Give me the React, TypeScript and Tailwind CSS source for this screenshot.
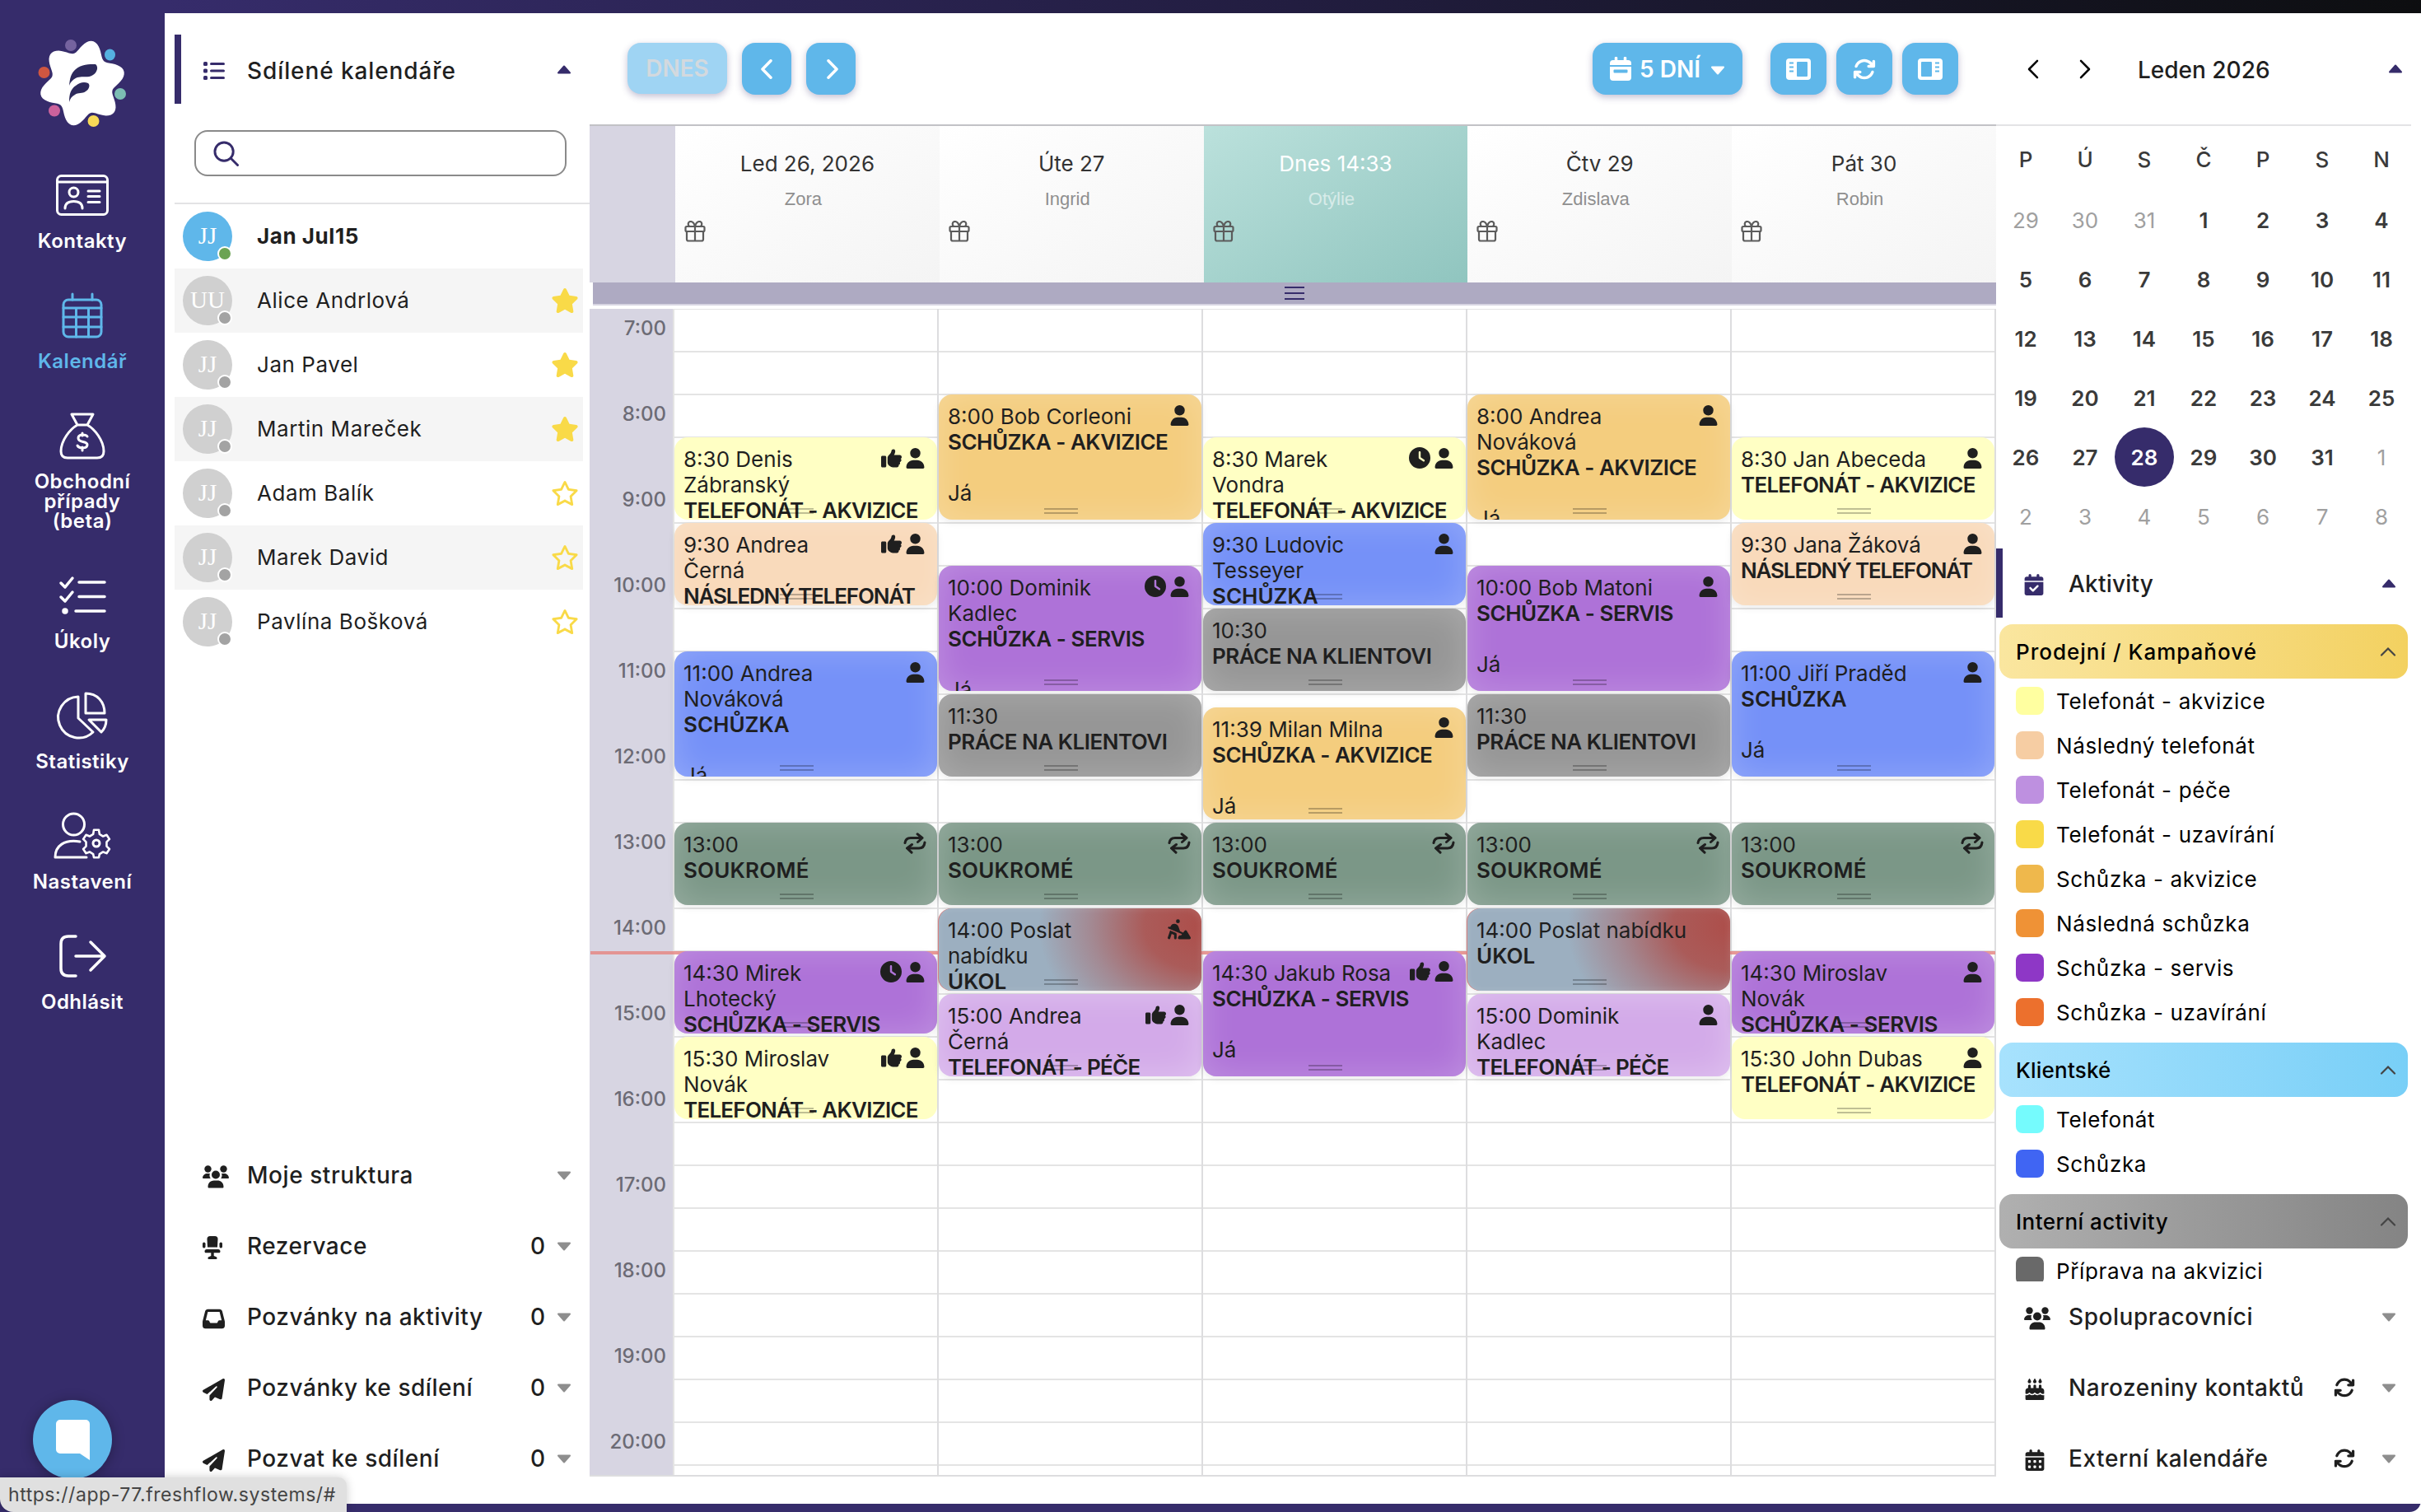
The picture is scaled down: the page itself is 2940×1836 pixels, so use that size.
import type { ReactNode } from "react";
import clsx from "clsx";
import {
  FaArrowsRotate,
  FaCakeCandles,
  FaCalendarCheck,
  FaCalendarDays,
  FaClock,
  FaInbox,
  FaPaperPlane,
  FaPersonDigging,
  FaRegStar,
  FaStar,
  FaThumbsUp,
  FaUser,
} from "react-icons/fa6";

type EventKind =
  | "call"
  | "followUp"
  | "care"
  | "acquisition"
  | "service"
  | "meeting"
  | "client"
  | "private"
  | "task";

type EventIcon = "user" | "thumb" | "clock" | "repeat" | "dig";

interface CalendarEvent {
  start: number; // minutes since 7:00
  end: number;
  lines: string[];
  title: string;
  note?: string;
  kind: EventKind;
  icons: EventIcon[];
}

interface Day {
  label: string;
  nameDay: string;
  today?: boolean;
  events: CalendarEvent[];
}

const HOUR_HEIGHT = 104;

const kindStyles: Record<EventKind, string> = {
  call: "bg-[#ffffc4]",
  followUp: "bg-[#f9dabb] shadow-[inset_0_0_30px_rgba(255,255,255,0.2),0_3px_10px_rgba(0,0,0,0.08)]",
  care: "bg-[#d3aae9] shadow-[inset_0_0_40px_rgba(255,255,255,0.3),0_3px_10px_rgba(0,0,0,0.08)]",
  acquisition: "bg-[#f4cd7e] shadow-[inset_0_0_40px_rgba(255,255,255,0.22),0_3px_10px_rgba(0,0,0,0.08)]",
  service: "bg-[#ae72d8] shadow-[inset_0_0_40px_rgba(255,255,255,0.22),0_3px_10px_rgba(0,0,0,0.08)]",
  meeting: "bg-[#7591f8] shadow-[inset_0_0_40px_rgba(255,255,255,0.22),0_3px_10px_rgba(0,0,0,0.08)]",
  client: "bg-[#969696] shadow-[inset_0_0_40px_rgba(255,255,255,0.22),0_3px_10px_rgba(0,0,0,0.08)]",
  private: "bg-[#7b9787] shadow-[inset_0_0_40px_rgba(255,255,255,0.22),0_3px_10px_rgba(0,0,0,0.08)]",
  task: "bg-[#9cafc0] bg-[radial-gradient(ellipse_62%_150%_at_100%_22%,#ad4e4a_0%,rgba(172,82,78,0.9)_35%,rgba(170,100,102,0.5)_68%,rgba(157,175,192,0)_100%)] shadow-[inset_0_0_10px_rgba(255,255,255,0.12),-1px_0_0_#d98080,0_3px_10px_rgba(0,0,0,0.08)]",
};

const titleTracking: Record<EventKind, string> = {
  call: "tracking-[-0.75px]",
  followUp: "tracking-[-1.15px]",
  care: "tracking-[-0.7px]",
  acquisition: "tracking-[-0.5px]",
  service: "tracking-[-0.45px]",
  meeting: "tracking-normal",
  client: "tracking-[-0.5px]",
  private: "tracking-[0.2px]",
  task: "tracking-normal",
};

const days: Day[] = [
  {
    label: "Led 26, 2026",
    nameDay: "Zora",
    events: [
      { start: 90, end: 150, lines: ["8:30 Denis", "Zábranský"], title: "Telefonát - akvizice", kind: "call", icons: ["thumb", "user"] },
      { start: 150, end: 210, lines: ["9:30 Andrea", "Černá"], title: "Následný telefonát", kind: "followUp", icons: ["thumb", "user"] },
      { start: 240, end: 330, lines: ["11:00 Andrea", "Nováková"], title: "Schůzka", note: "Já", kind: "meeting", icons: ["user"] },
      { start: 360, end: 420, lines: ["13:00"], title: "Soukromé", kind: "private", icons: ["repeat"] },
      { start: 450, end: 510, lines: ["14:30 Mirek", "Lhotecký"], title: "Schůzka - servis", kind: "service", icons: ["clock", "user"] },
      { start: 510, end: 570, lines: ["15:30 Miroslav", "Novák"], title: "Telefonát - akvizice", kind: "call", icons: ["thumb", "user"] },
    ],
  },
  {
    label: "Úte 27",
    nameDay: "Ingrid",
    events: [
      { start: 60, end: 150, lines: ["8:00 Bob Corleoni"], title: "Schůzka - akvizice", note: "Já", kind: "acquisition", icons: ["user"] },
      { start: 180, end: 270, lines: ["10:00 Dominik", "Kadlec"], title: "Schůzka - servis", note: "Já", kind: "service", icons: ["clock", "user"] },
      { start: 270, end: 330, lines: ["11:30"], title: "Práce na klientovi", kind: "client", icons: [] },
      { start: 360, end: 420, lines: ["13:00"], title: "Soukromé", kind: "private", icons: ["repeat"] },
      { start: 420, end: 480, lines: ["14:00 Poslat", "nabídku"], title: "Úkol", kind: "task", icons: ["dig"] },
      { start: 480, end: 540, lines: ["15:00 Andrea", "Černá"], title: "Telefonát - péče", kind: "care", icons: ["thumb", "user"] },
    ],
  },
  {
    label: "Dnes 14:33",
    nameDay: "Otýlie",
    today: true,
    events: [
      { start: 90, end: 150, lines: ["8:30 Marek", "Vondra"], title: "Telefonát - akvizice", kind: "call", icons: ["clock", "user"] },
      { start: 150, end: 210, lines: ["9:30 Ludovic", "Tesseyer"], title: "Schůzka", kind: "meeting", icons: ["user"] },
      { start: 210, end: 270, lines: ["10:30"], title: "Práce na klientovi", kind: "client", icons: [] },
      { start: 279, end: 360, lines: ["11:39 Milan Milna"], title: "Schůzka - akvizice", note: "Já", kind: "acquisition", icons: ["user"] },
      { start: 360, end: 420, lines: ["13:00"], title: "Soukromé", kind: "private", icons: ["repeat"] },
      { start: 450, end: 540, lines: ["14:30 Jakub Rosa"], title: "Schůzka - servis", note: "Já", kind: "service", icons: ["thumb", "user"] },
    ],
  },
  {
    label: "Čtv 29",
    nameDay: "Zdislava",
    events: [
      { start: 60, end: 150, lines: ["8:00 Andrea", "Nováková"], title: "Schůzka - akvizice", note: "Já", kind: "acquisition", icons: ["user"] },
      { start: 180, end: 270, lines: ["10:00 Bob Matoni"], title: "Schůzka - servis", note: "Já", kind: "service", icons: ["user"] },
      { start: 270, end: 330, lines: ["11:30"], title: "Práce na klientovi", kind: "client", icons: [] },
      { start: 360, end: 420, lines: ["13:00"], title: "Soukromé", kind: "private", icons: ["repeat"] },
      { start: 420, end: 480, lines: ["14:00 Poslat nabídku"], title: "Úkol", kind: "task", icons: [] },
      { start: 480, end: 540, lines: ["15:00 Dominik", "Kadlec"], title: "Telefonát - péče", kind: "care", icons: ["user"] },
    ],
  },
  {
    label: "Pát 30",
    nameDay: "Robin",
    events: [
      { start: 90, end: 150, lines: ["8:30 Jan Abeceda"], title: "Telefonát - akvizice", kind: "call", icons: ["user"] },
      { start: 150, end: 210, lines: ["9:30 Jana Žáková"], title: "Následný telefonát", kind: "followUp", icons: ["user"] },
      { start: 240, end: 330, lines: ["11:00 Jiří Praděd"], title: "Schůzka", note: "Já", kind: "meeting", icons: ["user"] },
      { start: 360, end: 420, lines: ["13:00"], title: "Soukromé", kind: "private", icons: ["repeat"] },
      { start: 450, end: 510, lines: ["14:30 Miroslav", "Novák"], title: "Schůzka - servis", kind: "service", icons: ["user"] },
      { start: 510, end: 570, lines: ["15:30 John Dubas"], title: "Telefonát - akvizice", kind: "call", icons: ["user"] },
    ],
  },
];

const people = [
  { name: "Jan Jul15", initials: "JJ", me: true },
  { name: "Alice Andrlová", initials: "UU", starred: true },
  { name: "Jan Pavel", initials: "JJ", starred: true },
  { name: "Martin Mareček", initials: "JJ", starred: true },
  { name: "Adam Balík", initials: "JJ" },
  { name: "Marek David", initials: "JJ" },
  { name: "Pavlína Bošková", initials: "JJ" },
];

const activityGroups = [
  {
    name: "Prodejní / Kampaňové",
    color: "bg-linear-to-r from-[#fae69f] to-[#f3d160] tracking-[1px]",
    items: [
      { name: "Telefonát - akvizice", color: "bg-[#ffffa0]" },
      { name: "Následný telefonát", color: "bg-[#f6cda3]" },
      { name: "Telefonát - péče", color: "bg-[#be90e0]" },
      { name: "Telefonát - uzavírání", color: "bg-[#f9da48]" },
      { name: "Schůzka - akvizice", color: "bg-[#efb84c]" },
      { name: "Následná schůzka", color: "bg-[#ef9236]" },
      { name: "Schůzka - servis", color: "bg-[#8e37c6]" },
      { name: "Schůzka - uzavírání", color: "bg-[#ec702d]" },
    ],
  },
  {
    name: "Klientské",
    color: "bg-linear-to-r from-[#a7e2fd] to-[#78cff7] tracking-[0.2px]",
    items: [
      { name: "Telefonát", color: "bg-[#75fbfd]" },
      { name: "Schůzka", color: "bg-[#4065f3]" },
    ],
  },
  {
    name: "Interní activity",
    color: "bg-linear-to-r from-[#b0b0b0] to-[#848484] tracking-[0.5px]",
    items: [{ name: "Příprava na akvizici", color: "bg-[#696969]" }],
  },
];

const weeks = [
  [29, 30, 31, 1, 2, 3, 4],
  [5, 6, 7, 8, 9, 10, 11],
  [12, 13, 14, 15, 16, 17, 18],
  [19, 20, 21, 22, 23, 24, 25],
  [26, 27, 28, 29, 30, 31, 1],
  [2, 3, 4, 5, 6, 7, 8],
];

// Six-lobed badge, centred on 100/101
const badgePath =
  Array.from({ length: 120 }, (_, i) => {
    const a = (i / 120) * Math.PI * 2;
    const r = 45 + 7.5 * Math.cos(6 * (a + (76 * Math.PI) / 180));
    const x = (100 + r * Math.cos(a)).toFixed(1);
    const y = (101 + r * Math.sin(a)).toFixed(1);
    return `${i === 0 ? "M" : "L"}${x} ${y}`;
  }).join("") + "Z";

const Logo = () => (
  <svg viewBox="40 40 120 120" className="size-[120px]">
    <path d={badgePath} fill="#fff" />
    <path d="M84 104c1-9 2-15 8-20 7-6 16-6 24-6 4 3 2 10-3 13-6 4-12 1-19 3-5 2-8 5-10 10z" fill="#2d2a5c" />
    <path d="M84 124c0-10 2-16 8-20 5-4 10-5 15-3 3 2 1 8-3 10-4 3-9 1-13 4-4 2-6 5-7 9z" fill="#2d2a5c" />
    <ellipse cx="86" cy="55" rx="7" ry="7" fill="#75639f" />
    <ellipse cx="133.500" cy="66.500" rx="6.500" ry="7" fill="#55b1e0" />
    <ellipse cx="146" cy="114" rx="7" ry="7" fill="#7cbdb3" />
    <ellipse cx="113.500" cy="147" rx="7" ry="7" fill="#f8da57" />
    <ellipse cx="66" cy="134.500" rx="7" ry="7" fill="#cc629c" />
    <ellipse cx="53.500" cy="88" rx="7" ry="7" fill="#cf5640" />
  </svg>
);

const LineIcon = ({ children, className }: { children: ReactNode; className?: string }) => (
  <svg
    viewBox="0 0 72 64"
    className={clsx("h-16 w-[72px]", className)}
    fill="none"
    stroke="currentColor"
    strokeWidth={3}
    strokeLinecap="round"
    strokeLinejoin="round"
  >
    {children}
  </svg>
);

const navItems = [
  {
    label: "Kontakty",
    icon: (
      <LineIcon>
        <rect x="5.500" y="8.500" width="61" height="47" rx="5" />
        <path d="M6 16h60M43 27h14M43 33.500h14M43 40.500h14" />
        <circle cx="25.500" cy="28.500" r="5.500" />
        <path d="M15 48c0-6 4-8.500 10.500-8.500S36 42 36 48" />
      </LineIcon>
    ),
  },
  {
    label: "Kalendář",
    active: true,
    icon: (
      <LineIcon>
        <rect x="13" y="13" width="46" height="45" rx="6" />
        <path d="M24 6v7M48 6v7M13 23h46M13 34h46M13 46h46M28.500 23v35M43.500 23v35" />
      </LineIcon>
    ),
  },
  {
    label: "Obchodní případy (beta)",
    icon: (
      <LineIcon>
        <path d="M23 6h26l-7 13H30zM30 19c-9 5-20 19-20 32 0 6 3 8 8 8h36c5 0 8-2 8-8 0-13-11-27-20-32z" />
        <path d="M42 33c-2-3-11-3-11 2 0 6 11 3 11 8 0 5-10 5-12 1M36 29v3M36 46v4" />
      </LineIcon>
    ),
  },
  {
    label: "Úkoly",
    icon: (
      <LineIcon className="stroke-[3.500px]">
        <path d="m10 17 5 5 9-11M10 34l5 5 9-11M32 16h31M32 33.500h31M28 51h35" />
        <circle cx="15" cy="51" r="2" fill="currentColor" />
      </LineIcon>
    ),
  },
  {
    label: "Statistiky",
    icon: (
      <LineIcon>
        <path d="M31 9a25 25 0 1 0 18 43L31 35zM40 5v24h23C63 15 54 5 40 5zM44 37h21c0 6-2 11-6 15z" />
      </LineIcon>
    ),
  },
  {
    label: "Nastavení",
    icon: (
      <LineIcon>
        <circle cx="25.500" cy="18" r="13" />
        <path d="M33 39C14 36 3 44 3 58h38" />
        <path
          d="M50 23h7l1 6 5 3 5-2 4 6-4 4v6l4 4-4 6-5-2-5 3-1 5h-7l-1-5-5-3-5 2-4-6 4-4v-6l-4-4 4-6 5 2 5-3z"
          transform="translate(7 5) scale(.86)"
        />
        <circle cx="53" cy="41" r="4" />
      </LineIcon>
    ),
  },
  {
    label: "Odhlásit",
    icon: (
      <LineIcon className="stroke-[3.500px]">
        <path d="M28 8h-9c-6 0-9 3-9 9v30c0 6 3 9 9 9h9M28 32h35M46 15l17 17-17 17" />
      </LineIcon>
    ),
  },
];

const Caret = ({ up, className }: { up?: boolean; className?: string }) => (
  <svg viewBox="0 0 18 11" className={clsx("h-[11px] w-[18px] shrink-0", up && "rotate-180", className)}>
    <path d="M2 1.500h14L9 9.500z" fill="currentColor" stroke="currentColor" strokeWidth={2} strokeLinejoin="round" />
  </svg>
);

const ListIcon = () => (
  <svg viewBox="0 0 26 24" className="h-6 w-[26px]" fill="currentColor">
    {[1, 9.500, 18].map((y) => (
      <g key={y}>
        <rect x="0" y={y} width="5" height="5" rx="1.500" />
        <rect x="8" y={y + 1} width="18" height="3" rx="1.500" />
      </g>
    ))}
  </svg>
);

const TeamIcon = () => (
  <svg viewBox="0 0 32 28" className="h-7 w-8" fill="currentColor">
    <circle cx="6.500" cy="4.500" r="4.200" />
    <circle cx="25.500" cy="4.500" r="4.200" />
    <circle cx="16" cy="11.500" r="5" />
    <path d="M0 15.500C0 12 3 10 6 10h3c-1 2-.5 4 .7 6H1zM32 15.500C32 12 29 10 26 10h-3c1 2 .5 4-.7 6H31zM6.500 26c0-5 3.500-7.500 7.500-7.500h4c4 0 7.500 2.500 7.500 7.500 0 1-.5 1.500-1.500 1.500H8c-1 0-1.500-.5-1.500-1.500z" />
  </svg>
);

const OfficeChairIcon = () => (
  <svg viewBox="0 0 24 28" className="h-7 w-6" fill="currentColor">
    <path d="M5.500 3.500A3.500 3.500 0 0 1 9 0h6a3.500 3.500 0 0 1 3.500 3.500L18 13.500H6z" />
    <rect x="0" y="7.500" width="3.500" height="7" rx="1.700" />
    <rect x="20.500" y="7.500" width="3.500" height="7" rx="1.700" />
    <path d="M2.500 18.500c0-1.500 1-2.500 2.500-2.500h14c1.500 0 2.500 1 2.500 2.500 0 1-.5 1.800-1.500 1.800h-6.300V24l3 1.300c1.200.6 1.300 2.700-.2 2.700h-9c-1.500 0-1.400-2.100-.2-2.700l3-1.300v-3.700H4c-1 0-1.500-.8-1.500-1.800z" />
  </svg>
);

const GiftIcon = () => (
  <svg viewBox="0 0 26 26" className="size-[26px]" fill="none" stroke="currentColor" strokeWidth={2.200}>
    <rect x="1.500" y="7" width="23" height="6" rx="1.500" />
    <path d="M3 13v9.500a2 2 0 0 0 2 2h16a2 2 0 0 0 2-2V13M13 7v17.500M13 7C12 3 10 1 7.500 1 4 1 4 6 6.500 7M13 7c1-4 3-6 5.500-6C22 1 22 6 19.500 7" />
  </svg>
);

const RepeatIcon = () => (
  <svg viewBox="0 0 28 26" className="-mr-0.5 h-[26px] w-7" fill="none" stroke="currentColor" strokeWidth={3} strokeLinecap="round" strokeLinejoin="round">
    <path d="M2 12.500C2.500 8.500 5 6.500 9 6.500h13M17 1.800 23 6.500 17.500 11.500M26 12c-.5 4.500-3 7-7 7H5.500M10.500 14.500 4.500 19 10 24.200" />
  </svg>
);

const SidePanelIcon = ({ right }: { right?: boolean }) => (
  <svg viewBox="0 0 30 26" className={clsx("h-[26px] w-[30px]", right && "-scale-x-100")}>
    <rect x="0" y="0" width="30" height="26" rx="4" fill="#fff" />
    <rect x="13" y="4" width="13" height="18" rx="1" fill="#5fb7ea" />
    <path d="M4 5.500h5M4 10.500h5M4 15.500h5" stroke="#5fb7ea" strokeWidth={2} />
  </svg>
);

const Chevron = ({ right, className }: { right?: boolean; className?: string }) => (
  <svg
    viewBox="0 0 14 24"
    className={clsx("h-6 w-3.5", right && "-scale-x-100", className)}
    fill="none"
    stroke="currentColor"
    strokeLinecap="round"
    strokeLinejoin="round"
  >
    <path d="M12 1.800 2 12l10 10.200" />
  </svg>
);

const EventIconView = ({ icon }: { icon: EventIcon }) => {
  switch (icon) {
    case "thumb":
      return <FaThumbsUp className="size-[25px]" />;
    case "clock":
      return <FaClock className="size-[26px]" />;
    case "repeat":
      return <RepeatIcon />;
    case "dig":
      return <FaPersonDigging className="-mr-0.5 size-[28px]" />;
    default:
      return <FaUser className="h-[25px] w-[23px]" />;
  }
};

const EventCard = ({ event, offset }: { event: CalendarEvent; offset: number }) => {
  const height = ((event.end - event.start) / 60) * HOUR_HEIGHT - 4;

  return (
    <div
      className={clsx(
        "relative mb-1 w-full shrink-0 overflow-hidden rounded-2xl pt-[11px] pl-[11px] text-[26px] leading-[31px] text-[#1f1f1f]",
        kindStyles[event.kind],
      )}
      style={{ marginTop: offset, height }}
    >
      <div className="flex justify-between pr-[15px]">
        <div className="whitespace-nowrap">
          {event.lines.map((line) => (
            <div key={line}>{line}</div>
          ))}
        </div>
        <div className="flex h-7 items-center gap-[5px]">
          {event.icons.map((icon) => (
            <EventIconView key={icon} icon={icon} />
          ))}
        </div>
      </div>
      <div className={clsx("whitespace-nowrap font-semibold uppercase", titleTracking[event.kind])}>
        {event.title}
      </div>
      {event.note && <div className="mt-[31px]">{event.note}</div>}
      <div className="absolute bottom-[7px] left-[128px] h-[7px] w-[41px] border-y-2 border-black/25" />
    </div>
  );
};

const DayColumn = ({ day }: { day: Day }) => (
  <div className="flex min-w-0 flex-1 flex-col border-r-2 border-[#dddddf] bg-[repeating-linear-gradient(to_bottom,#e4e4e4_0,#e4e4e4_1px,transparent_1px,transparent_51px,#e4e4e4_51px,#e4e4e4_52px)]">
    {day.events.map((event, i) => {
      const previousEnd = i > 0 ? day.events[i - 1].end : 0;
      return (
        <EventCard
          key={event.start}
          event={event}
          offset={((event.start - previousEnd) / 60) * HOUR_HEIGHT}
        />
      );
    })}
  </div>
);

interface ToolButtonProps {
  children: ReactNode;
  className?: string;
  disabled?: boolean;
}

const ToolButton = ({ children, className, disabled }: ToolButtonProps) => (
  <button
    disabled={disabled}
    className={clsx(
      "flex items-center justify-center rounded-2xl text-[28px] font-semibold shadow-[0_3px_8px_rgba(54,44,107,0.3)]",
      disabled ? "h-[62px] bg-[#9fd4f3] text-[#d3d9de]" : "h-[63px] bg-[#5fb7ea] text-white",
      className,
    )}
  >
    {children}
  </button>
);

interface SectionProps {
  icon: ReactNode;
  label: string;
  count?: number;
  refresh?: boolean;
}

const Section = ({ icon, label, count, refresh }: SectionProps) => (
  <div className="flex h-[86px] items-center text-[28px] font-medium text-[#1f1f1f]">
    <div className="flex w-[54px] items-center pt-1">{icon}</div>
    <div className="flex-1 whitespace-nowrap tracking-[0.55px]">{label}</div>
    {count !== undefined && <div className="mr-[14px]">{count}</div>}
    {refresh && <FaArrowsRotate className="mr-[32px] size-[26px]" />}
    <Caret className="text-[#8e8e8e]" />
  </div>
);

const Sidebar = () => (
  <nav className="relative flex w-[200px] shrink-0 flex-col items-center bg-[#362c6b] pt-10">
    <Logo />
    <div className="mt-[45px] flex flex-col items-center">
      {navItems.map((item) => (
        <div
          key={item.label}
          className={clsx(
            "mb-[46px] flex w-[140px] flex-col items-center",
            item.active ? "text-[#5fb7ea]" : "text-white",
          )}
        >
          {item.icon}
          <div className="mt-3 text-center text-2xl/6 font-semibold tracking-[0.5px]">{item.label}</div>
        </div>
      ))}
    </div>
    <div className="absolute top-[1700px] left-10 flex size-24 items-center justify-center rounded-full bg-[#5fb7ea] shadow-[0_2px_16px_rgba(0,0,0,0.3)]">
      <svg viewBox="0 0 41 49" className="h-[49px] w-[41px]">
        <path d="M5 0h31a5 5 0 0 1 5 5v44L29 41H5a5 5 0 0 1-5-5V5a5 5 0 0 1 5-5z" fill="#fff" />
      </svg>
    </div>
  </nav>
);

const SharedCalendars = () => (
  <div className="flex w-[516px] shrink-0 flex-col pl-3">
    <div className="mt-[26px] flex h-[84px] items-center border-l-8 border-[#362c6b] pr-[22px] pl-[27px]">
      <div className="w-[53px] pt-1 text-[#362c6b]">
        <ListIcon />
      </div>
      <div className="flex-1 pt-[3px] text-[28px] font-medium tracking-[0.9px] text-[#1f1f1f]">Sdílené kalendáře</div>
      <Caret up className="text-[#362c6b]" />
    </div>
    <div className="mt-8 ml-6 flex h-14 w-[452px] items-center rounded-2xl border-2 border-[#8a8a8a] pl-[21px] text-[#362c6b]">
      <svg viewBox="0 0 32 32" className="size-[31px]" fill="none" stroke="currentColor" strokeWidth={3} strokeLinecap="round">
        <circle cx="13.500" cy="13.500" r="11.500" />
        <path d="m22 22 8.500 8.500" />
      </svg>
    </div>
    <div className="mt-8 border-t-2 border-[#e3e3e5]">
      {people.map((person, i) => (
        <div
          key={person.name}
          className={clsx("mr-2 flex h-[78px] items-center pr-[5px] pl-[10px]", i % 2 === 1 && "bg-[#f5f5f5]")}
        >
          <div
            className={clsx(
              "relative flex size-[60px] items-center justify-center rounded-full font-['Liberation_Serif',serif] text-[29px] text-white",
              person.me ? "bg-[#5fb7ea]" : "bg-[#d0d0d0]",
            )}
          >
            {person.initials}
            <div
              className={clsx(
                "absolute right-0 bottom-0 size-[18px] rounded-full border-2 border-white",
                person.me ? "bg-[#6ba353]" : "bg-[#a3a3a3]",
              )}
            />
          </div>
          <div
            className={clsx(
              "ml-[30px] flex-1 pb-[2px] text-[26px] tracking-[0.55px] text-[#1f1f1f]",
              person.me && "font-bold",
            )}
          >
            {person.name}
          </div>
          {!person.me &&
            (person.starred ? (
              <FaStar className="size-[34px] text-[#f9da48]" />
            ) : (
              <FaRegStar className="size-[34px] text-[#f9da48]" />
            ))}
        </div>
      ))}
    </div>
    <div className="mt-auto mb-3 pr-[22px] pl-[34px]">
      <Section icon={<TeamIcon />} label="Moje struktura" />
      <Section icon={<OfficeChairIcon />} label="Rezervace" count={0} />
      <Section icon={<FaInbox className="size-[27px]" />} label="Pozvánky na aktivity" count={0} />
      <Section icon={<FaPaperPlane className="size-[27px]" />} label="Pozvánky ke sdílení" count={0} />
      <Section icon={<FaPaperPlane className="size-[27px]" />} label="Pozvat ke sdílení" count={0} />
    </div>
  </div>
);

const Calendar = () => (
  <div className="flex w-[1708px] shrink-0 flex-col">
    <div className="flex h-[135px] items-start pt-9 pr-[46px] pl-[46px]">
      <ToolButton disabled className="w-[121px]">
        DNES
      </ToolButton>
      <ToolButton className="ml-[18px] w-[60px]">
        <Chevron className="stroke-[3.500px]" />
      </ToolButton>
      <ToolButton className="ml-[18px] w-[60px]">
        <Chevron right className="ml-1 stroke-[3.500px]" />
      </ToolButton>
      <ToolButton className="ml-auto w-[182px]">
        <svg viewBox="0 0 26 29" className="mr-[10px] h-[29px] w-[26px]">
          <path d="M4 4h18a4 4 0 0 1 4 4v2H0V8a4 4 0 0 1 4-4zM0 12h26v13a4 4 0 0 1-4 4H4a4 4 0 0 1-4-4z" fill="#fff" />
          <path d="M7.500 1.500V6M18.500 1.500V6" stroke="#fff" strokeWidth={3.500} strokeLinecap="round" />
          <rect x="4.500" y="15.500" width="17" height="4" rx="1" fill="#5fb7ea" />
        </svg>
        5 DNÍ
        <Caret className="mt-1 ml-3" />
      </ToolButton>
      <ToolButton className="ml-[34px] w-[68px]">
        <SidePanelIcon />
      </ToolButton>
      <ToolButton className="ml-3 w-[68px]">
        <FaArrowsRotate />
      </ToolButton>
      <ToolButton className="ml-3 w-[68px]">
        <SidePanelIcon right />
      </ToolButton>
    </div>

    <div className="flex h-[192px] border-t-2 border-[#c2c2c6]">
      <div className="w-[104px] shrink-0 bg-[#d7d5e2]" />
      {days.map((day) => (
        <div
          key={day.label}
          className={clsx(
            "flex min-w-0 flex-1 flex-col bg-linear-to-br pt-7",
            day.today ? "from-[#bbe1dc] to-[#90c5bf]" : "from-white to-[#f4f4f4]",
          )}
        >
          <div className={clsx("text-center text-[26px]/9", day.today ? "text-white" : "text-[#333333]")}>
            {day.label}
          </div>
          <div
            className={clsx(
              "mt-[9px] pr-[10px] text-center font-['Liberation_Sans',sans-serif] text-[22px]/8",
              day.today ? "text-white/55" : "text-[#8f8f8f]",
            )}
          >
            {day.nameDay}
          </div>
          <div className="mt-[10px] ml-[11px] text-[#5c5c5c]">
            <GiftIcon />
          </div>
        </div>
      ))}
    </div>

    <div className="ml-1 flex h-7 items-center justify-center border-b-2 border-[#d7d5e2] bg-[#aeaac2]">
      <div className="flex flex-col gap-[5px]">
        <div className="h-[2px] w-6 bg-[#362c6b]" />
        <div className="h-[2px] w-6 bg-[#362c6b]" />
        <div className="h-[2px] w-6 bg-[#362c6b]" />
      </div>
    </div>

    <div className="mt-1 flex h-[1418px] overflow-hidden border-b-2 border-[#dddddf]">
      <div className="w-[103px] shrink-0 border-r-2 border-[#e4e4e4] bg-[#d7d5e2]">
        {Array.from({ length: 14 }, (_, i) => (
          <div key={i} className="h-[104px] pt-[10px] pr-2 text-right text-2xl/7 font-medium text-[#6c6b75]">
            {i + 7}:00
          </div>
        ))}
      </div>
      <div className="relative flex flex-1">
        {/* current time */}
        <div className="absolute top-[780px] -left-[102px] h-1 w-[1706px] bg-[#e6837f]/80" />
        {days.map((day) => (
          <DayColumn key={day.label} day={day} />
        ))}
      </div>
    </div>
  </div>
);

const MiniCalendar = () => (
  <>
    <div className="flex h-[135px] items-center pr-[22px] pl-[38px]">
      <Chevron className="stroke-[2.500px]" />
      <Chevron right className="ml-[49px] stroke-[2.500px]" />
      <div className="ml-[57px] flex-1 pt-[3px] text-[28px] font-medium text-[#1f1f1f]">Leden 2026</div>
      <Caret up className="text-[#362c6b]" />
    </div>
    <div className="mr-3 grid grid-cols-7 border-t-2 border-[#e3e3e5] pt-[5px] text-center text-[26px]">
      {["P", "Ú", "S", "Č", "P", "S", "N"].map((name, i) => (
        <div key={i} className="h-[73px] pt-4 font-medium text-[#3a3a3a]">
          {name}
        </div>
      ))}
      {weeks.map((week, row) =>
        week.map((date, col) => {
          const outside = (row === 0 && date > 20) || (row > 3 && date < 20);
          const selected = date === 28;
          return (
            <div
              key={`${row}-${col}`}
              className={clsx(
                "flex h-[72px] w-[72px] items-center justify-center rounded-full",
                outside && "text-[#a0a0a0]",
                selected && "bg-[#362c6b] font-semibold text-white",
                !outside && !selected && "font-semibold text-[#3a3a3a]",
              )}
            >
              {date}
            </div>
          );
        }),
      )}
    </div>
  </>
);

const Activities = () => (
  <>
    <div className="mt-[3px] flex h-[84px] shrink-0 items-center border-l-8 border-[#362c6b] pr-[30px] pl-[25px]">
      <FaCalendarCheck className="mt-1 size-[26px] text-[#362c6b]" />
      <div className="ml-[29px] flex-1 pt-[2px] text-[28px] font-medium tracking-[0.2px] text-[#1f1f1f]">Aktivity</div>
      <Caret up className="text-[#362c6b]" />
    </div>
    <div className="h-[806px] overflow-hidden pr-4 pl-1">
      {activityGroups.map((group) => (
        <div key={group.name} className="pt-[10px] first:pt-2">
          <div
            className={clsx(
              "flex h-[66px] items-center justify-between rounded-2xl pr-[14px] pl-5 text-[26px] font-medium text-black",
              group.color,
            )}
          >
            {group.name}
            <svg viewBox="0 0 20 12" className="h-3 w-5" fill="none" stroke="#444" strokeWidth={2.200} strokeLinecap="round">
              <path d="m2 10.500 8-8 8 8" />
            </svg>
          </div>
          {group.items.map((item) => (
            <div key={item.name} className="flex h-[54px] items-center pl-5 text-[26px] tracking-[0.65px] text-black">
              <div className={clsx("mr-[15px] size-[34px] rounded-lg", item.color)} />
              {item.name}
            </div>
          ))}
        </div>
      ))}
    </div>
  </>
);

const RightPanel = () => (
  <div className="flex flex-1 flex-col">
    <MiniCalendar />
    <Activities />
    <div className="pr-[30px] pl-[34px] tracking-[0.75px]">
      <Section icon={<TeamIcon />} label="Spolupracovníci" />
      <Section icon={<FaCakeCandles className="size-[26px]" />} label="Narozeniny kontaktů" refresh />
      <Section icon={<FaCalendarDays className="size-[26px]" />} label="Externí kalendáře" refresh />
    </div>
  </div>
);

const App = () => (
  <div className="relative flex h-[1836px] w-[2940px] overflow-hidden rounded-br-[14px] bg-white font-['Inter',sans-serif]">
    <Sidebar />
    <div className="flex flex-1 flex-col">
      <div className="h-4 shrink-0 bg-linear-to-r from-[#362c6b] via-[#221d40] to-[#0d0e10]" />
      <div className="flex h-[1810px]">
        <SharedCalendars />
        <Calendar />
        <RightPanel />
      </div>
      <div className="h-[10px] bg-[#362c6b]" />
    </div>
    <div className="absolute bottom-0 left-0 flex h-[42px] w-[421px] items-center rounded-tr-[10px] rounded-bl-2xl bg-[#e0e0e0] pl-[10px] text-[23px] tracking-[0.55px] whitespace-nowrap text-[#454545] shadow-[0_0_12px_rgba(0,0,0,0.2)]">
      https://app-77.freshflow.systems/#
    </div>
  </div>
);

export default App;
